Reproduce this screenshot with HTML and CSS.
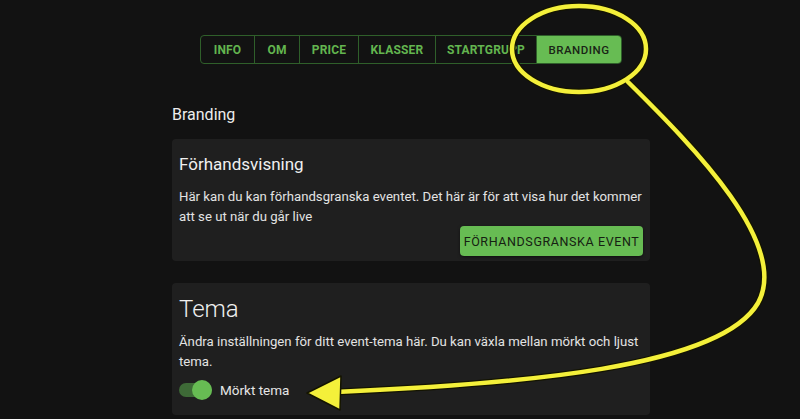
FILE: index.html
```html
<!DOCTYPE html>
<html>
<head>
<meta charset="utf-8">
<link rel="stylesheet" href="styles.css">
</head>
<body>
<div class="page">
  <nav class="tabs">
    <span class="tab t-info">INFO</span>
    <span class="tab t-om">OM</span>
    <span class="tab t-price">PRICE</span>
    <span class="tab t-klasser">KLASSER</span>
    <span class="tab t-start">STARTGRUPP</span>
    <span class="tab t-brand active">BRANDING</span>
  </nav>
  <main class="content">
    <h2 class="section-title">Branding</h2>
    <section class="card card-preview">
      <h3 class="card-title">Förhandsvisning</h3>
      <p class="card-text">Här kan du kan förhandsgranska eventet. Det här är för att visa hur det kommer att se ut när du går live</p>
      <div class="actions"><button class="btn">FÖRHANDSGRANSKA EVENT</button></div>
    </section>
    <section class="card card-theme">
      <h3 class="card-title big">Tema</h3>
      <p class="card-text">Ändra inställningen för ditt event-tema här. Du kan växla mellan mörkt och ljust tema.</p>
      <label class="switch-row"><span class="switch"><span class="knob"></span></span><span class="switch-label">Mörkt tema</span></label>
    </section>
  </main>
</div>
<svg class="annot" width="800" height="419" viewBox="0 0 800 419">
  <g fill="none" stroke-linecap="round">
    <ellipse cx="579" cy="49" rx="67" ry="43" stroke="#141400" stroke-width="7"/>
    <path d="M628,82 C695,148 790,245 758,303 C720,368 520,384 336,392" stroke="#141400" stroke-width="7"/>
    <ellipse cx="579" cy="49" rx="67" ry="43" stroke="#f4f03a" stroke-width="4.5"/>
    <path d="M628,82 C695,148 790,245 758,303 C720,368 520,384 336,392" stroke="#f4f03a" stroke-width="4.5"/>
  </g>
  <polygon points="307,393 341,376 340,410" fill="#f4f03a" stroke="#141400" stroke-width="1.5" stroke-linejoin="round"/>
</svg>
</body>
</html>
```
FILE: styles.css
```css
* { box-sizing: border-box; }
html, body { margin: 0; padding: 0; }
body {
  background: #121212;
  font-family: Roboto, "Liberation Sans", sans-serif;
  color: #e6e6e6;
  width: 800px;
  height: 419px;
  overflow: hidden;
  position: relative;
}
.page { padding-top: 35px; }
.tabs {
  display: flex;
  width: 422px;
  height: 29px;
  margin-left: 200px;
  border: 1px solid #2f5f2a;
  border-radius: 4px;
}
.tab {
  display: flex;
  align-items: center;
  justify-content: center;
  font-size: 12px;
  font-weight: 700;
  color: #63b54f;
  border-right: 1px solid #2f5f2a;
  letter-spacing: 0.2px;
}
.t-info { width: 54px; }
.t-om { width: 45px; }
.t-price { width: 59px; }
.t-klasser { width: 77px; }
.t-start { width: 101px; }
.t-brand { flex: 1; border-right: none; }
.tab.active {
  background: #67bc53;
  color: #1a2416;
  font-weight: 500;
  font-size: 11.5px;
  border-radius: 0 3px 3px 0;
  letter-spacing: 0.5px;
}
.content { margin-left: 172px; width: 478px; padding-top: 39px; }
.section-title {
  margin: 0 0 12px 0;
  font-size: 16px;
  font-weight: 400;
  color: #ededed;
  line-height: 24px;
}
.card {
  background: #1f1f1f;
  border-radius: 4px;
  padding: 13px 7px 7px 7px;
}
.card-preview { height: 122px; }
.card-theme { margin-top: 22px; height: 132px; padding-top: 14px; }
.card-title {
  margin: 0;
  font-size: 17px;
  font-weight: 400;
  line-height: 24px;
  color: #f0f0f0;
}
.card-title.big { font-size: 24px; font-weight: 300; line-height: 24px; }
.card-text {
  margin: 11px 0 0 0;
  font-size: 13.2px;
  line-height: 20px;
  color: #e3e3e3;
}
.card-theme .card-text { margin-top: 11px; }
.actions { display: flex; justify-content: flex-end; margin-top: -1px; }
.btn {
  background: #67bc53;
  border: none;
  border-radius: 4px;
  height: 30px;
  width: 183px;
  font-family: Roboto, "Liberation Sans", sans-serif;
  font-size: 12.5px;
  font-weight: 400;
  color: #162012;
  letter-spacing: 0.6px;
  white-space: nowrap;
  padding: 0;
  box-shadow: 0 1px 3px rgba(0,0,0,0.5);
}
.switch-row { display: flex; align-items: center; margin-top: 10px; gap: 8px; }
.switch {
  position: relative;
  width: 33px;
  height: 14px;
  border-radius: 7px;
  background: #3e6a37;
}
.knob {
  position: absolute;
  right: 0;
  top: -3px;
  width: 20px;
  height: 20px;
  border-radius: 50%;
  background: #67bc53;
}
.switch-label { font-size: 13.5px; font-weight: 400; color: #e6e6e6; }
.annot { position: absolute; left: 0; top: 0; pointer-events: none; }
```
